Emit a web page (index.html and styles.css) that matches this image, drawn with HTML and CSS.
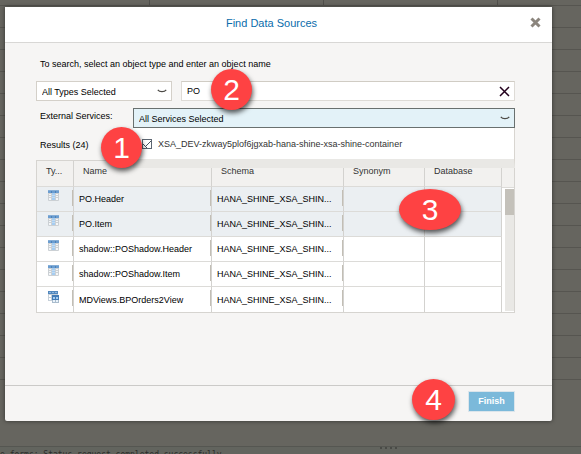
FILE: index.html
```html
<!DOCTYPE html>
<html lang="en">
<head>
<meta charset="utf-8">
<title>Find Data Sources</title>
<link rel="stylesheet" href="styles.css">
</head>
<body>
<svg class="defs" aria-hidden="true">
  <symbol id="table" viewBox="0 0 11 12">
    <rect x="0" y="0" width="11" height="11" rx="1" fill="#cbd0d4"/>
    <rect x="0" y="0" width="11" height="1" fill="#86aed6"/>
    <rect x="0" y="1" width="11" height="2" fill="#6b9dd0"/>
    <path d="M3 1h1v2H3zM7 1h1v2H7z" fill="#4b82ba"/>
    <path d="M1 4h2v1H1zM1 6h2v1H1zM1 8h2v2H1zM8 4h2v1H8zM8 6h2v1H8zM8 8h2v2H8z" fill="#f4f6f8"/>
    <path d="M4 3h3v7H4z" fill="#a5cdf2"/>
    <path d="M4 5h3v1H4zM4 7h3v1H4z" fill="#c3dcf3"/>
  </symbol>
  <symbol id="view" viewBox="0 0 11 12">
    <rect x="0" y="0" width="10" height="10" fill="#c6d0d9"/>
    <rect x="0" y="0" width="10" height="3" fill="#5287bd"/>
    <path d="M1 1h2v1H1zM4 1h2v1H4zM7 1h2v1H7z" fill="#8db6de"/>
    <path d="M1 4h2v2H1zM1 7h2v2H1z" fill="#fff"/>
    <rect x="4" y="4" width="7" height="8" fill="#a9bccd"/>
    <rect x="4" y="4" width="7" height="5" fill="#447cb6"/>
    <path d="M5 6h2v2H5zM8 6h2v2H8z" fill="#a5cdf2"/>
    <path d="M5 9h2v2H5zM8 9h2v2H8z" fill="#eaf3fb"/>
  </symbol>
  <symbol id="chevron" viewBox="0 0 10 4">
    <path d="M.8.8C2.500 3.300 7.500 3.300 9.200.8" fill="none" stroke="#4c4a46" stroke-width="1.200"/>
  </symbol>
</svg>

<main class="dialog" role="dialog" aria-labelledby="title">
  <header class="head">
    <h1 id="title">Find Data Sources</h1>
    <button class="close" aria-label="Close">
      <svg viewBox="0 0 11 11"><path d="M1.500 1.500l8 8M9.500 1.500l-8 8" stroke="#8b857d" stroke-width="3"/></svg>
    </button>
  </header>

  <section class="content">
    <p class="prompt">To search, select an object type and enter an object name</p>
    <div class="filters">
      <div class="drop types">
        <select aria-label="Object type"><option>All Types Selected</option></select>
        <svg><use href="#chevron"/></svg>
      </div>
      <div class="search">
        <input type="text" value="PO" aria-label="Object name">
        <button aria-label="Clear"><svg viewBox="0 0 11 11"><path d="M1 1l9 9M10 1l-9 9" stroke="#23001c" stroke-width="1.500"/></svg></button>
        <span class="badge two">2</span>
      </div>
    </div>
    <div class="services">
      <label for="services">External Services:</label>
      <div class="drop active">
        <select id="services"><option>All Services Selected</option></select>
        <svg><use href="#chevron"/></svg>
        <div class="popup">
          <label><input type="checkbox" checked>XSA_DEV-zkway5plof6jgxab-hana-shine-xsa-shine-container</label>
        </div>
        <span class="badge one">1</span>
      </div>
    </div>
    <p class="results">Results (24)</p>
    <div class="grid">
      <table>
        <colgroup><col class="c-type"><col class="c-name"><col class="c-schema"><col class="c-syn"><col></colgroup>
        <thead>
          <tr><th>Ty...</th><th>Name</th><th>Schema</th><th>Synonym</th><th>Database</th></tr>
        </thead>
        <tbody>
          <tr class="sel"><td><svg><use href="#table"/></svg></td><td>PO.Header</td><td>HANA_SHINE_XSA_SHIN...</td><td></td><td></td></tr>
          <tr class="sel"><td><svg><use href="#table"/></svg></td><td>PO.Item</td><td>HANA_SHINE_XSA_SHIN...</td><td></td><td></td></tr>
          <tr><td><svg><use href="#table"/></svg></td><td>shadow::POShadow.Header</td><td>HANA_SHINE_XSA_SHIN...</td><td></td><td></td></tr>
          <tr><td><svg><use href="#table"/></svg></td><td>shadow::POShadow.Item</td><td>HANA_SHINE_XSA_SHIN...</td><td></td><td></td></tr>
          <tr><td><svg><use href="#view"/></svg></td><td>MDViews.BPOrders2View</td><td>HANA_SHINE_XSA_SHIN...</td><td></td><td></td></tr>
        </tbody>
      </table>
      <div class="gutter"><div class="track"><div class="thumb"></div></div></div>
      <span class="badge three">3</span>
    </div>
  </section>

  <footer class="foot">
    <button class="finish">Finish</button>
    <span class="badge four">4</span>
  </footer>
</main>

<div class="console"><span>e forms: Status request completed successfully</span><i></i></div>
</body>
</html>
```
FILE: styles.css
```css
* { box-sizing: border-box; }

body {
  margin: 0;
  height: 100vh;
  overflow: hidden;
  display: flex;
  flex-direction: column;
  padding: 7px 29px 0 5px;
  font: 9px/12px "Liberation Sans", Arial, sans-serif;
  color: #000;
  background:
    linear-gradient(#504f4b, #504f4b) 149px 0 / 1px 5px no-repeat,
    linear-gradient(#504f4b, #504f4b) 323px 0 / 1px 5px no-repeat,
    linear-gradient(#504f4b, #504f4b) 497px 0 / 1px 5px no-repeat,
    linear-gradient(#66655f, #66655f) 0 380px / 100% 100% no-repeat,
    repeating-linear-gradient(#66655f 0 5px, #565550 5px 6px, #66655f 6px 22px);
}

.defs { position: absolute; width: 0; height: 0; }
h1, p { margin: 0; }
button, input, select { font: inherit; color: inherit; }
svg { display: block; }

.dialog {
  flex: 1;
  display: flex;
  flex-direction: column;
  background: #f6f5f4;
  border-radius: 0 0 2px 2px;
  box-shadow: 0 0 4px rgba(0, 0, 0, .5);
}

.head {
  display: grid;
  grid-template-columns: 30px 1fr 30px;
  align-items: center;
  height: 36px;
  padding: 0 2px;
  background: #fff;
  border-bottom: 1px solid #d8d7d5;
}
.head h1 {
  grid-column: 2;
  padding: 0 14px 3px 0;
  font-size: 11px;
  font-weight: 400;
  line-height: 14px;
  text-align: center;
  color: #0a6cab;
}
.close {
  padding: 0 0 4px 10px;
  border: 0;
  background: none;
  justify-self: start;
}
.close svg { width: 11px; height: 11px; }

.content {
  flex: 1;
  padding: 15px 37px 0 31px;
}
.prompt { padding-left: 4px; margin-bottom: 11px; }

.filters { display: flex; gap: 9px; }
.types { flex: 0 0 136px; }
.drop { position: relative; height: 20px; }
.drop select {
  width: 100%;
  height: 100%;
  padding: 1px 20px 0 5px;
  border: 1px solid #d4d0c9;
  border-radius: 0;
  background: #fff;
  appearance: none;
}
.drop > svg {
  position: absolute;
  right: 5px;
  top: 8px;
  width: 10px;
  height: 4px;
  pointer-events: none;
}
.search {
  position: relative;
  flex: 1;
  display: flex;
  align-items: center;
  padding-right: 4px;
  background: #fff;
  border: 1px solid #dedbd6;
  border-top-color: #d0ccc4;
}
.search input {
  flex: 1;
  min-width: 0;
  padding: 0 5px;
  border: 0;
  background: none;
  outline: 0;
}
.search button { padding: 0; border: 0; background: none; }
.search button svg { width: 11px; height: 11px; }

.services { display: flex; margin-top: 7px; }
.services > label { flex: 0 0 97px; padding: 2px 4px; }
.active { flex: 1; }
.active select { border-color: #69706f; background: #e3f2f8; }

.popup {
  position: absolute;
  z-index: 1;
  top: 20px;
  left: 0;
  right: 0;
  background: #fff;
  border-right: 1px solid #d8d5d0;
  border-bottom: 9px solid #e9e8e5;
}
.popup label {
  display: flex;
  align-items: center;
  gap: 6px;
  height: 31px;
  padding-left: 9px;
  color: #333;
}
.popup input {
  width: 10px;
  height: 10px;
  margin: 0;
  border: 1px solid #5c6672;
  appearance: none;
  background:
    linear-gradient(45deg, transparent 44%, #44505c 44% 56%, transparent 56%) 0 4px / 4px 4px no-repeat,
    linear-gradient(-45deg, transparent 44%, #44505c 44% 56%, transparent 56%) 2px 1px / 6px 6px no-repeat,
    #fff;
}

.results { padding: 11px 4px 9px; }

.grid {
  position: relative;
  display: flex;
  background: #fff;
  border: 1px solid #d6d4d0;
}
table {
  flex: 1;
  min-width: 0;
  table-layout: fixed;
  border-collapse: separate;
  border-spacing: 0;
}
.c-type { width: 37px; }
.c-name { width: 138px; }
.c-schema { width: 132px; }
.c-syn { width: 81px; }
th, td {
  padding: 0 0 0 5px;
  text-align: left;
  white-space: nowrap;
  overflow: hidden;
  border-right: 1px solid #d3d2cf;
  border-bottom: 1px solid #dcdbd8;
}
th {
  height: 26px;
  padding: 0 0 5px 9px;
  font-weight: 400;
  color: #333;
  background: #f2f1ef;
}
td { height: 25px; }
tr:last-child td { border-bottom: 0; }
tr.sel td { background-color: #ebeff2; }
td:nth-child(-n+3) {
  background-image: linear-gradient(#c2beb5, #c2beb5);
  background-position: 100% 3px;
  background-size: 1px 16px;
  background-repeat: no-repeat;
}
td:first-child { padding: 0 0 6px 11px; }
td svg { width: 11px; height: 12px; }

.gutter {
  flex: 0 0 12px;
  display: flex;
  flex-direction: column;
  align-items: flex-end;
}
.gutter::before {
  content: "";
  height: 26px;
  width: 100%;
  background: #f2f1ef;
  border-bottom: 1px solid #dcdbd8;
}
.track { flex: 1; width: 9px; margin: 1px 0; background: #e9e8e5; }
.thumb { height: 26px; background: #c4c1ba; }

.foot {
  position: relative;
  display: flex;
  justify-content: flex-end;
  align-items: flex-start;
  height: 36px;
  padding: 5px 37px 0 0;
  border-top: 1px solid #cbcac8;
}
.finish {
  width: 47px;
  height: 21px;
  padding: 0 0 2px;
  border: 1px solid #dbe5eb;
  background: #7bb9da;
  color: #fff;
  font-weight: 700;
}

.badge {
  position: absolute;
  z-index: 2;
  display: flex;
  align-items: center;
  justify-content: center;
  width: 41px;
  height: 41px;
  border-radius: 50%;
  background: #fe4243;
  color: #fff;
  font: 30px/30px "Liberation Sans", Arial, sans-serif;
  box-shadow: 1px 3px 5px rgba(0, 0, 0, .65);
}
.one { left: -32px; top: 19px; }
.two { left: 29px; top: -13px; }
.three { left: 362px; top: 28px; width: 62px; }
.four { right: 97px; top: -7px; width: 43px; }

.console {
  display: flex;
  justify-content: space-between;
  height: 8px;
  margin: 25px -29px 0 -5px;
  padding-top: 3px;
  border-top: 1px solid #555651;
  background: #62645e;
  color: #2c2c2a;
  font: 8px/10px "DejaVu Sans Mono", monospace;
}
.console i {
  width: 18px;
  height: 2px;
  margin: -3px 183px 0 0;
  background: repeating-linear-gradient(90deg, #494a46 0 2px, transparent 2px 5px);
}
```
